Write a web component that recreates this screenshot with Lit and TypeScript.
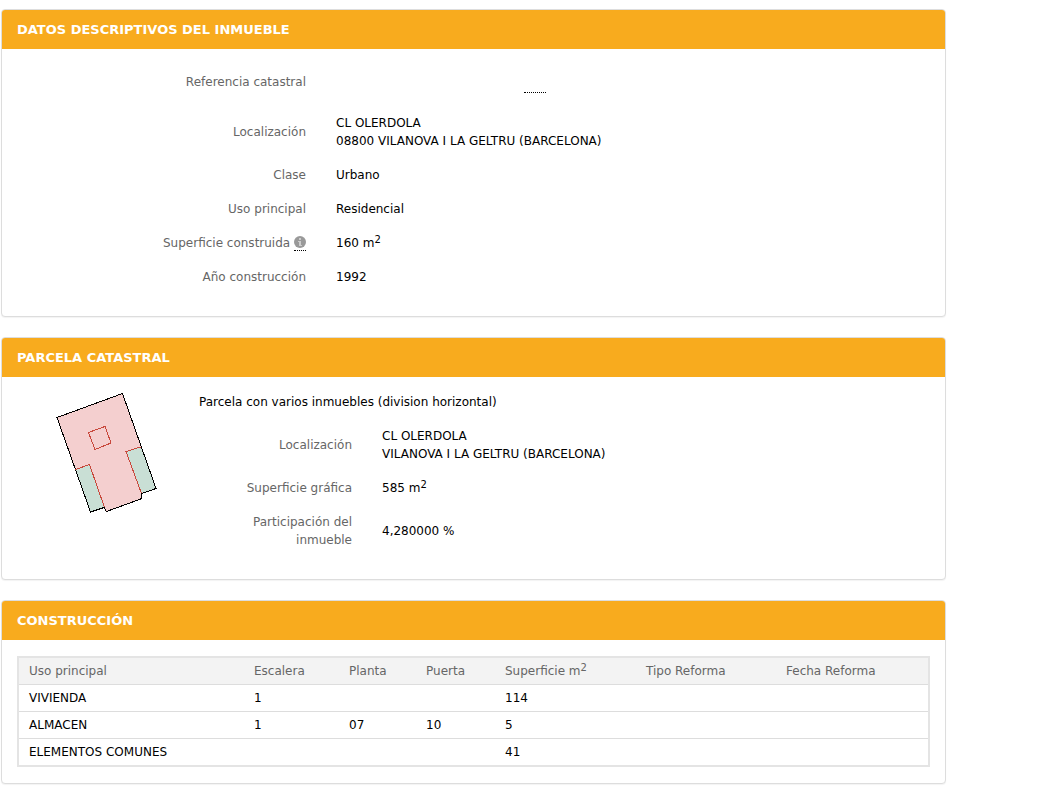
import { LitElement, html, css, svg } from "lit";
import { customElement, property } from "lit/decorators.js";

const parcelMap = svg`
  <g shape-rendering="crispEdges" stroke-width="1">
    <path d="M18 24.500 83.500 0.500 117 95.500 102.500 100.500 103 105.500 67.500 118.500 65 114.500 51.500 119Z" fill="#f4cfcf"/>
    <path d="M36.500 76.500 50.500 71.500 65.500 114.500 51.500 119Z" fill="#c9dfd5"/>
    <path d="M87.500 58.500 102 54.500 117 95.500 102.500 100.500Z" fill="#c9dfd5"/>
    <path d="M18 24.500 83.500 0.500 117 95.500 102.500 100.500 103 105.500 67.500 118.500 65 114.500 51.500 119Z" fill="none" stroke="#000"/>
    <path d="M36.500 76.500 50.500 71.500 65.500 114.500M101.500 54 87 58.500 102.500 100.500M49.500 39.500 66 33.500 72 50 56 56.500Z" fill="none" stroke="#c8483c"/>
  </g>`;

@customElement("data-panel")
export class DataPanel extends LitElement {
  @property() heading = "";

  static styles = css`
    :host {
      display: block;
    }
    .panel {
      border: 1px solid #ddd;
      border-radius: 4px;
      background: #fff;
      overflow: hidden;
      box-shadow: 0 1px 1px rgba(0, 0, 0, 0.05);
    }
    .heading {
      margin: 0;
      padding: 11px 15px 10px;
      background: #f8ab1e;
      color: #fff;
      font-size: 13px;
      line-height: 18px;
      font-weight: 700;
      text-transform: uppercase;
    }
    .body {
      padding: 16px 15px;
    }
  `;

  render() {
    return html`
      <section class="panel">
        <h2 class="heading">${this.heading}</h2>
        <div class="body"><slot></slot></div>
      </section>
    `;
  }
}

const columns = [
  html`Uso principal`,
  html`Escalera`,
  html`Planta`,
  html`Puerta`,
  html`Superficie m<sup class="sup">2</sup>`,
  html`Tipo Reforma`,
  html`Fecha Reforma`,
];

const rows = [
  ["VIVIENDA", "1", "", "", "114", "", ""],
  ["ALMACEN", "1", "07", "10", "5", "", ""],
  ["ELEMENTOS COMUNES", "", "", "", "41", "", ""],
];

@customElement("app-root")
export class AppRoot extends LitElement {
  static styles = css`
    :host {
      display: block;
      font-family: "DejaVu Sans", Verdana, sans-serif;
      font-size: 12px;
      line-height: 18px;
      color: #000;
    }
    .page {
      display: flex;
      flex-direction: column;
      gap: 20px;
      padding: 9px 109px 12px 1px;
    }
    .fields {
      margin: 0;
      display: flex;
      flex-direction: column;
      gap: 16px;
      padding-bottom: 14px;
    }
    .field {
      display: grid;
      grid-template-columns: 289fr 594fr;
      column-gap: 30px;
      align-items: center;
    }
    .parcel .field {
      grid-template-columns: 153fr 548fr;
    }
    .label {
      color: #666;
      text-align: right;
    }
    .value {
      margin: 0;
    }
    .reference {
      display: block;
      width: 22px;
      height: 27px;
      margin: 0 0 5px 188px;
      border-bottom: 1px dotted #000;
    }
    .sup {
      font-size: 10px;
      line-height: 0;
      vertical-align: 4px;
    }
    .hint {
      display: inline-block;
      height: 16px;
      vertical-align: top;
      border-bottom: 1px dotted #000;
    }
    .icon {
      display: block;
      width: 12px;
      height: 12px;
      margin-top: 2px;
    }
    .parcel {
      display: grid;
      grid-template-columns: 168px 1fr;
      column-gap: 14px;
    }
    .map {
      display: block;
      width: 130px;
      height: 130px;
      margin-left: 22px;
    }
    .note {
      margin: 0 0 16px;
    }
    .table {
      width: 100%;
      border: 2px solid #e4e4e4;
      border-collapse: separate;
      border-spacing: 0;
      table-layout: fixed;
    }
    .head,
    .cell {
      padding: 4px 10px;
      text-align: left;
      font-weight: 400;
    }
    .head {
      color: #666;
      background: #f3f3f3;
    }
    .cell {
      border-top: 1px solid #ddd;
    }
    .w0 { width: 205px; }
    .w1 { width: 75px; }
    .w2 { width: 57px; }
    .w3 { width: 59px; }
    .w4 { width: 121px; }
    .w5 { width: 120px; }
  `;

  private field(label: unknown, value: unknown) {
    return html`
      <div class="field">
        <dt class="label">${label}</dt>
        <dd class="value">${value}</dd>
      </div>
    `;
  }

  render() {
    const sup = html`<sup class="sup">2</sup>`;
    const info = html`<abbr class="hint" aria-label="Información"
      ><svg class="icon" viewBox="0 0 12 12" aria-hidden="true">
        <circle cx="6" cy="6" r="6" fill="#999" />
        <path d="M5 2h2v2H5zM5 5h2v4h1v1H5V9zM4 5h1v1H4z" fill="#ccc" /></svg
    ></abbr>`;

    return html`
      <main class="page">
        <data-panel heading="Datos descriptivos del inmueble">
          <dl class="fields">
            ${this.field("Referencia catastral", html`<span class="reference"></span>`)}
            ${this.field("Localización", html`CL OLERDOLA<br />08800 VILANOVA I LA GELTRU (BARCELONA)`)}
            ${this.field("Clase", "Urbano")}
            ${this.field("Uso principal", "Residencial")}
            ${this.field(html`Superficie construida ${info}`, html`160 m${sup}`)}
            ${this.field("Año construcción", "1992")}
          </dl>
        </data-panel>

        <data-panel heading="Parcela catastral">
          <div class="parcel">
            <svg class="map" viewBox="0 0 130 130" role="img" aria-label="Plano de la parcela">
              ${parcelMap}
            </svg>
            <div>
              <p class="note">Parcela con varios inmuebles (division horizontal)</p>
              <dl class="fields">
                ${this.field("Localización", html`CL OLERDOLA<br />VILANOVA I LA GELTRU (BARCELONA)`)}
                ${this.field("Superficie gráfica", html`585 m${sup}`)}
                ${this.field("Participación del inmueble", "4,280000 %")}
              </dl>
            </div>
          </div>
        </data-panel>

        <data-panel heading="Construcción">
          <table class="table">
            <thead>
              <tr>
                ${columns.map((c, i) => html`<th class="head w${i}" scope="col">${c}</th>`)}
              </tr>
            </thead>
            <tbody>
              ${rows.map((r) => html`<tr>${r.map((v) => html`<td class="cell">${v}</td>`)}</tr>`)}
            </tbody>
          </table>
        </data-panel>
      </main>
    `;
  }
}
